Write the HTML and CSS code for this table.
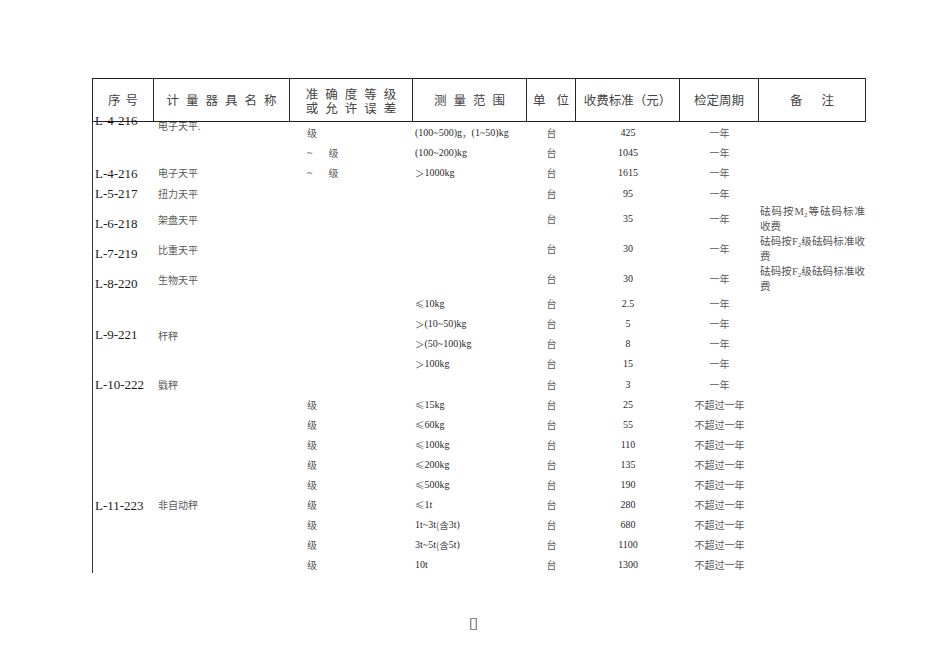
FILE: index.html
```
<!DOCTYPE html>
<html lang="zh">
<head>
<meta charset="utf-8">
<title>计量器具收费标准</title>
<link rel="stylesheet" href="styles.css">
</head>
<body>
<div class="page">
  <div class="sheet">
    <div class="head">
      <div class="h"><span class="ls5">序号</span></div>
      <div class="h"><span class="ls7">计量器具名称</span></div>
      <div class="h two"><span class="ls7">准确度等级</span><span class="ls7">或允许误差</span></div>
      <div class="h"><span class="ls7">测量范围</span></div>
      <div class="h"><span class="ls10">单位</span></div>
      <div class="h"><span>收费标准（元）</span></div>
      <div class="h"><span>检定周期</span></div>
      <div class="h"><span class="ls19">备注</span></div>
    </div>
    <div class="body">
      <!-- row 1 -->
      <div class="c code first">L-4-216</div>
      <div class="c name zh firstname">电子天平.</div>
      <div class="c grade zh">级</div>
      <div class="c range">(100~500)g<span class="zh">，</span>(1~50)kg</div>
      <div class="c mid zh">台</div>
      <div class="c mid">425</div>
      <div class="c mid zh">一年</div>
      <div class="c"></div>
      <!-- row 2 -->
      <div class="c"></div>
      <div class="c"></div>
      <div class="c grade zh"><span class="tilde">~</span>级</div>
      <div class="c range">(100~200)kg</div>
      <div class="c mid zh">台</div>
      <div class="c mid">1045</div>
      <div class="c mid zh">一年</div>
      <div class="c"></div>
      <!-- row 3 -->
      <div class="c code">L-4-216</div>
      <div class="c name zh">电子天平</div>
      <div class="c grade zh"><span class="tilde">~</span>级</div>
      <div class="c range"><span class="zh">＞</span>1000kg</div>
      <div class="c mid zh">台</div>
      <div class="c mid">1615</div>
      <div class="c mid zh">一年</div>
      <div class="c"></div>
      <!-- row 4 -->
      <div class="c code">L-5-217</div>
      <div class="c name zh">扭力天平</div>
      <div class="c"></div>
      <div class="c"></div>
      <div class="c mid zh">台</div>
      <div class="c mid">95</div>
      <div class="c mid zh">一年</div>
      <div class="c"></div>
      <!-- row 5 -->
      <div class="c code low">L-6-218</div>
      <div class="c name zh nlow">架盘天平</div>
      <div class="c"></div>
      <div class="c"></div>
      <div class="c mid zh">台</div>
      <div class="c mid">35</div>
      <div class="c mid zh">一年</div>
      <div class="c note">砝码按M<sub>2</sub>等砝码标准收费</div>
      <!-- row 6 -->
      <div class="c code low">L-7-219</div>
      <div class="c name zh nlow">比重天平</div>
      <div class="c"></div>
      <div class="c"></div>
      <div class="c mid zh">台</div>
      <div class="c mid">30</div>
      <div class="c mid zh">一年</div>
      <div class="c note">砝码按F<sub>2</sub>级砝码标准收费</div>
      <!-- row 7 -->
      <div class="c code low">L-8-220</div>
      <div class="c name zh nlow">生物天平</div>
      <div class="c"></div>
      <div class="c"></div>
      <div class="c mid zh">台</div>
      <div class="c mid">30</div>
      <div class="c mid zh">一年</div>
      <div class="c note">砝码按F<sub>2</sub>级砝码标准收费</div>
      <!-- rows 8-11 -->
      <div class="c code span4">L-9-221</div>
      <div class="c name zh span4 slow">杆秤</div>
      <div class="c"></div>
      <div class="c range"><span class="zh">≤</span>10kg</div>
      <div class="c mid zh">台</div>
      <div class="c mid">2.5</div>
      <div class="c mid zh">一年</div>
      <div class="c"></div>

      <div class="c"></div>
      <div class="c range"><span class="zh">＞</span>(10~50)kg</div>
      <div class="c mid zh">台</div>
      <div class="c mid">5</div>
      <div class="c mid zh">一年</div>
      <div class="c"></div>

      <div class="c"></div>
      <div class="c range"><span class="zh">＞</span>(50~100)kg</div>
      <div class="c mid zh">台</div>
      <div class="c mid">8</div>
      <div class="c mid zh">一年</div>
      <div class="c"></div>

      <div class="c"></div>
      <div class="c range"><span class="zh">＞</span>100kg</div>
      <div class="c mid zh">台</div>
      <div class="c mid">15</div>
      <div class="c mid zh">一年</div>
      <div class="c"></div>
      <!-- row 12 -->
      <div class="c code">L-10-222</div>
      <div class="c name zh">戥秤</div>
      <div class="c"></div>
      <div class="c"></div>
      <div class="c mid zh">台</div>
      <div class="c mid">3</div>
      <div class="c mid zh">一年</div>
      <div class="c"></div>
      <!-- rows 13-21 -->
      <div class="c"></div><div class="c"></div>
      <div class="c grade zh">级</div>
      <div class="c range"><span class="zh">≤</span>15kg</div>
      <div class="c mid zh">台</div><div class="c mid">25</div>
      <div class="c mid zh">不超过一年</div><div class="c"></div>

      <div class="c"></div><div class="c"></div>
      <div class="c grade zh">级</div>
      <div class="c range"><span class="zh">≤</span>60kg</div>
      <div class="c mid zh">台</div><div class="c mid">55</div>
      <div class="c mid zh">不超过一年</div><div class="c"></div>

      <div class="c"></div><div class="c"></div>
      <div class="c grade zh">级</div>
      <div class="c range"><span class="zh">≤</span>100kg</div>
      <div class="c mid zh">台</div><div class="c mid">110</div>
      <div class="c mid zh">不超过一年</div><div class="c"></div>

      <div class="c"></div><div class="c"></div>
      <div class="c grade zh">级</div>
      <div class="c range"><span class="zh">≤</span>200kg</div>
      <div class="c mid zh">台</div><div class="c mid">135</div>
      <div class="c mid zh">不超过一年</div><div class="c"></div>

      <div class="c"></div><div class="c"></div>
      <div class="c grade zh">级</div>
      <div class="c range"><span class="zh">≤</span>500kg</div>
      <div class="c mid zh">台</div><div class="c mid">190</div>
      <div class="c mid zh">不超过一年</div><div class="c"></div>

      <div class="c code">L-11-223</div>
      <div class="c name zh">非自动秤</div>
      <div class="c grade zh">级</div>
      <div class="c range"><span class="zh">≤</span>1t</div>
      <div class="c mid zh">台</div><div class="c mid">280</div>
      <div class="c mid zh">不超过一年</div><div class="c"></div>

      <div class="c"></div><div class="c"></div>
      <div class="c grade zh">级</div>
      <div class="c range">1t~3t<span class="zh">(含</span>3t)</div>
      <div class="c mid zh">台</div><div class="c mid">680</div>
      <div class="c mid zh">不超过一年</div><div class="c"></div>

      <div class="c"></div><div class="c"></div>
      <div class="c grade zh">级</div>
      <div class="c range">3t~5t<span class="zh">(含</span>5t)</div>
      <div class="c mid zh">台</div><div class="c mid">1100</div>
      <div class="c mid zh">不超过一年</div><div class="c"></div>

      <div class="c"></div><div class="c"></div>
      <div class="c grade zh">级</div>
      <div class="c range">10t</div>
      <div class="c mid zh">台</div><div class="c mid">1300</div>
      <div class="c mid zh">不超过一年</div><div class="c"></div>
    </div>
  </div>
  <div class="footer"><span class="tofu"></span></div>
</div>
</body>
</html>
```
FILE: styles.css
```
html, body {
  margin: 0;
  padding: 0;
  background: #fff;
}
body {
  font-family: "Liberation Serif", "Noto Sans CJK SC", serif;
  color: #2a2a2a;
}
.page {
  width: 950px;
  height: 672px;
  box-sizing: border-box;
  padding: 78px 0 0 92px;
  overflow: hidden;
}
.sheet {
  width: 774px;
}
.head {
  display: grid;
  grid-template-columns: 61px 136px 123px 114px 49px 104px 79px 107px;
  height: 44px;
  box-sizing: border-box;
  border-top: 1px solid #222;
  border-left: 1px solid #222;
  border-bottom: 1px solid #222;
}
.h {
  border-right: 1px solid #222;
  display: flex;
  align-items: center;
  justify-content: center;
  font-family: "Noto Sans CJK SC", sans-serif;
  font-size: 12.5px;
  color: #444;
  line-height: 14px;
}
.h.two {
  flex-direction: column;
  padding-top: 2px;
}
.ls5 { letter-spacing: 5px; margin-right: -5px; }
.ls7 { letter-spacing: 7px; margin-right: -7px; }
.ls10 { letter-spacing: 11px; margin-right: -11px; }
.ls19 { letter-spacing: 19px; margin-right: -19px; }

.body {
  display: grid;
  grid-template-columns: 61px 136px 123px 114px 49px 104px 79px 107px;
  grid-template-rows: 21px 20px 20px 21px 30px 30px 30px 20px 20px 20px 20px 21px repeat(9, 20px);
  border-left: 1px solid #333;
  height: 451px;
}
.c {
  display: flex;
  align-items: center;
  font-size: 10px;
  line-height: 10px;
  white-space: nowrap;
  min-width: 0;
}
.zh {
  font-family: "Noto Sans CJK SC", sans-serif;
  color: #595959;
}
.c.zh {
  font-size: 10px;
}
.range .zh {
  font-size: 9.5px;
}
.code {
  font-size: 13px;
  line-height: 13px;
  padding-left: 2px;
  color: #1a1a1a;
}
.code.first {
  align-self: start;
  margin-top: -8px;
}
.code.low {
  padding-top: 8px;
}
.code.span4, .name.span4 {
  grid-row: span 4;
}
.name {
  padding-left: 4px;
}
.name.firstname {
  align-self: start;
  margin-top: -1px;
}
.name.nlow {
  padding-top: 2px;
}
.name.slow {
  padding-top: 3px;
}
.grade {
  padding-left: 17px;
}
.tilde {
  font-family: "Liberation Serif", serif;
  font-size: 10px;
  margin-right: 16px;
  color: #333;
}
.range {
  padding-left: 2px;
}
.mid {
  justify-content: center;
}
.note {
  display: block;
  white-space: normal;
  font-family: "Liberation Serif", "Noto Sans CJK SC", serif;
  color: #555;
  font-size: 10.5px;
  line-height: 15px;
  text-align: justify;
  padding-left: 1px;
  padding-right: 1px;
  align-self: start;
}
.note sub {
  font-size: 7px;
  line-height: 0;
  vertical-align: -2px;
}
.footer {
  width: 774px;
  margin-top: 45px;
  display: flex;
  justify-content: center;
  padding-right: 12px;
  box-sizing: border-box;
}
.tofu {
  display: inline-block;
  width: 5px;
  height: 10px;
  border: 1px solid #8a8a8a;
  box-shadow: inset 1px 0 0 #d0d0d0, inset -1px 0 0 #d0d0d0;
}
```
